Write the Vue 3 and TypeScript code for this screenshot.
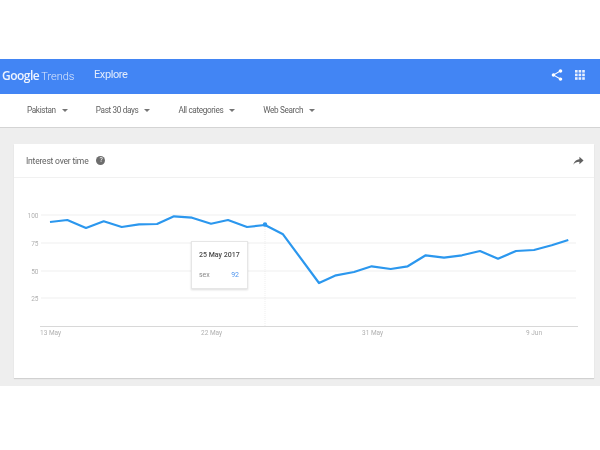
<script setup lang="ts">
const filters = ['Pakistan', 'Past 30 days', 'All categories', 'Web Search']

const points: [number, number][] = [
  [36, 44], [53.3, 42], [72, 50], [89.7, 43.3], [107.7, 49], [125, 46.3], [143, 46],
  [160, 38.3], [178, 39.7], [197, 45.7], [214, 42], [233, 49], [251, 47], [269, 56.3],
  [305, 105], [322, 97.3], [340, 94], [357.7, 88.3], [376.7, 91], [393.7, 88.3],
  [411.7, 77.3], [430, 79.7], [448, 77.3], [466, 73], [484, 80.7], [502, 73],
  [520, 72], [537.7, 67.3], [554.3, 62],
]
const line = points.map((p) => p.join(',')).join(' ')

const yTicks = [
  { label: '100', y: 37 },
  { label: '75', y: 65 },
  { label: '50', y: 93 },
  { label: '25', y: 120 },
]
const xTicks = [
  { label: '13 May', x: 26 },
  { label: '22 May', x: 187 },
  { label: '31 May', x: 348 },
  { label: '9 Jun', x: 512 },
]
</script>

<template>
  <div class="page">
    <header class="topbar">
      <div class="logo"><span class="logo-g">Google</span> <span class="logo-t">Trends</span></div>
      <span class="explore">Explore</span>
      <div class="top-icons">
        <svg width="14" height="14" viewBox="0 0 24 24" fill="#fff">
          <path d="M18 16.100c-.8 0-1.400.3-2 .8l-7.100-4.200c.1-.2.100-.5.100-.7s0-.5-.1-.7L16 7.200c.5.500 1.200.8 2 .8 1.700 0 3-1.300 3-3s-1.300-3-3-3-3 1.300-3 3c0 .2 0 .5.100.7L8 9.800C7.500 9.300 6.800 9 6 9c-1.700 0-3 1.300-3 3s1.300 3 3 3c.8 0 1.500-.3 2-.8l7.100 4.200c-.1.200-.1.400-.1.600 0 1.600 1.300 2.900 3 2.900s3-1.300 3-2.900-1.300-2.900-3-2.900z" />
        </svg>
        <svg width="10" height="10" viewBox="0 0 10 10" fill="#e8f0fe">
          <g v-for="r in 3" :key="r">
            <rect v-for="c in 3" :key="c" :x="(c - 1) * 3.6" :y="(r - 1) * 3.6" width="2.6" height="2.6" />
          </g>
        </svg>
      </div>
    </header>

    <nav class="filters">
      <div v-for="f in filters" :key="f" class="filter">
        <span>{{ f }}</span>
        <i class="caret"></i>
      </div>
    </nav>

    <main class="content">
      <section class="card">
        <div class="card-head">
          <span class="card-title">Interest over time</span>
          <span class="help">?</span>
          <svg class="reply" width="11" height="11" viewBox="0 0 24 24" fill="#616161">
            <path d="M14 9V4l9 8-9 8v-5.100C8 14.900 3.700 16.800 1 21c1-6 4.500-11 13-12z" />
          </svg>
        </div>

        <div class="chart">
          <svg width="580" height="200" viewBox="0 0 580 200">
            <g v-for="t in yTicks" :key="t.label">
              <line x1="27" x2="562" :y1="t.y" :y2="t.y" class="grid" />
              <text x="24.500" :y="t.y + 2.500" text-anchor="end" class="tick">{{ t.label }}</text>
            </g>
            <line x1="251" x2="251" y1="47" y2="148" class="guide" />
            <line x1="26" x2="564" y1="148.500" y2="148.500" class="axis" />
            <text v-for="t in xTicks" :key="t.label" :x="t.x" y="156.500" class="tick">{{ t.label }}</text>
            <polyline :points="line" class="trend" />
            <circle cx="251" cy="46.500" r="2.200" fill="#2b97ee" />
          </svg>

          <div class="tooltip">
            <div class="tip-date">25 May 2017</div>
            <div class="tip-row">
              <span>sex</span>
              <span class="tip-value">92</span>
            </div>
          </div>
        </div>
      </section>
    </main>
  </div>
</template>

<style>
html,
body {
  background: #fff;
}
</style>

<style scoped>
.page {
  width: 600px;
  height: 450px;
  padding-top: 59px;
  box-sizing: border-box;
  background: #fff;
  font-family: Roboto, "Liberation Sans", sans-serif;
  filter: blur(0.55px);
}

.topbar {
  height: 35px;
  box-sizing: border-box;
  background: #4285f4;
  color: #fff;
  display: flex;
  align-items: center;
  padding: 0 15px 4px 2px;
}

.logo {
  width: 92px;
  white-space: nowrap;
}

.logo-g {
  font-family: "Open Sans", sans-serif;
  font-size: 12px;
  font-weight: 600;
  letter-spacing: -0.5px;
  color: #eef4fe;
}

.logo-t {
  font-size: 11px;
  font-weight: 300;
  margin-left: -2px;
  color: #dbe7fd;
}

.explore {
  font-size: 11px;
  letter-spacing: -0.4px;
  color: #e3edfd;
}

.top-icons {
  margin-left: auto;
  display: flex;
  align-items: center;
  gap: 11px;
}

.filters {
  height: 34px;
  box-sizing: border-box;
  display: flex;
  align-items: center;
  padding: 0 0 1px 27px;
  margin-bottom: 0;
  border-bottom: 1px solid #d4d4d4;
  font-size: 8.200px;
  letter-spacing: -0.35px;
  color: #616161;
}

.filter {
  display: flex;
  align-items: center;
  gap: 6px;
  margin-right: 28px;
}

.caret {
  width: 0;
  height: 0;
  border-left: 3px solid transparent;
  border-right: 3px solid transparent;
  border-top: 3px solid #757575;
}

.content {
  height: 258px;
  box-sizing: border-box;
  background: #eeeeee;
  padding: 16px 6px 0 14px;
}

.card {
  height: 234px;
  background: #fff;
  box-shadow: 0 1px 1px rgba(0, 0, 0, 0.12);
}

.card-head {
  height: 34px;
  box-sizing: border-box;
  display: flex;
  align-items: center;
  padding: 0 10px 0 12px;
  border-bottom: 1px solid #f1f1f1;
  font-size: 8.500px;
  letter-spacing: -0.2px;
  color: #616161;
}

.card-title {
  margin-right: 8px;
}

.help {
  width: 9px;
  height: 9px;
  border-radius: 50%;
  background: #6d6d6d;
  color: #fff;
  font-size: 7px;
  line-height: 9px;
  text-align: center;
}

.reply {
  margin-left: auto;
}

.chart {
  position: relative;
  height: 200px;
}

.chart svg {
  display: block;
}

.grid {
  stroke: #efefef;
  stroke-width: 1;
}

.axis {
  stroke: #d8d8d8;
  stroke-width: 1.200;
}

.guide {
  stroke: #e4e4e4;
  stroke-width: 0.600;
  stroke-dasharray: 1 1;
}

.tick {
  font-size: 6.500px;
  fill: #b0b0b0;
}

.trend {
  fill: none;
  stroke: #2b97ee;
  stroke-width: 2.200;
  stroke-linejoin: round;
}

.tooltip {
  position: absolute;
  left: 177px;
  top: 63px;
  width: 57px;
  height: 48px;
  box-sizing: border-box;
  padding: 9px 8px 0 7px;
  background: #fff;
  border: 1px solid #e6e6e6;
  box-shadow: 0 1px 2px rgba(0, 0, 0, 0.14);
  font-size: 7px;
  color: #8a8a8a;
}

.tip-date {
  color: #4a4a4a;
  font-weight: 500;
  white-space: nowrap;
  margin-bottom: 12px;
}

.tip-row {
  display: flex;
  justify-content: space-between;
}

.tip-value {
  color: #4f95ee;
}
</style>
